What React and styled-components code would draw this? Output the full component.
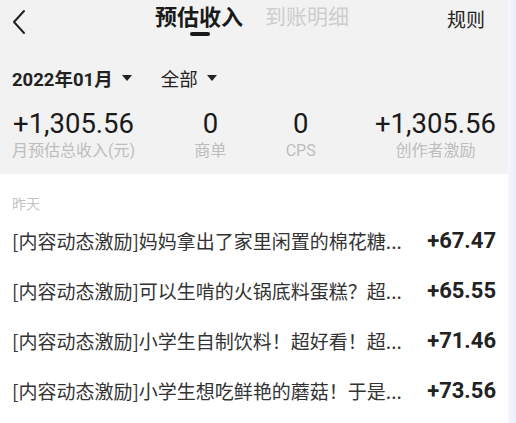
import React from "react";
import styled, { createGlobalStyle } from "styled-components";

const Global = createGlobalStyle`
  html, body { margin: 0; padding: 0; background: #ffffff; }
  body { font-family: Roboto, "Noto Sans CJK SC", sans-serif; }
  * { box-sizing: border-box; }
`;

const Page = styled.div`
  width: 516px;
  height: 423px;
  display: flex;
  overflow: hidden;
`;

const Main = styled.div`
  flex: 1;
  display: flex;
  flex-direction: column;
`;

const Strip = styled.div`
  width: 8px;
  background: linear-gradient(to right, #f4f6fb, #e9eef9);
`;

const Top = styled.div`
  background: #f2f2f2;
`;

const Header = styled.div`
  height: 60px;
  display: flex;
  align-items: flex-start;
`;

const Back = styled.div`
  width: 52px;
  padding: 9px 0 0 11px;
`;

const Tabs = styled.div`
  flex: 1;
  display: flex;
  gap: 22px;
  padding-left: 103px;
  padding-top: 0;
`;

const Tab = styled.div`
  position: relative;
  font-family: "Noto Sans CJK SC", sans-serif;
  font-size: ${(p) => (p.$active ? "22px" : "21px")};
  font-weight: ${(p) => (p.$active ? 700 : 400)};
  color: ${(p) => (p.$active ? "#1a1a1a" : "#cdcdcd")};
  line-height: 30px;
`;

const Indicator = styled.div`
  position: absolute;
  left: 35px;
  top: 32px;
  width: 20px;
  height: 4px;
  border-radius: 2px;
  background: #1a1a1a;
`;

const Rule = styled.div`
  font-family: "Noto Sans CJK SC", sans-serif;
  font-size: 19px;
  color: #222;
  padding: 6px 23px 0 0;
  line-height: 26px;
`;

const Filters = styled.div`
  display: flex;
  align-items: center;
  gap: 29px;
  padding: 5px 12px 0 12px;
  height: 31px;
`;

const Filter = styled.div`
  display: flex;
  align-items: center;
  gap: 9px;
  font-family: Roboto, "Noto Sans CJK SC", sans-serif;
  font-size: 18.5px;
  font-weight: ${(p) => (p.$bold ? 700 : 400)};
  color: #222;
`;

const Caret = styled.span`
  width: 0;
  height: 0;
  border-left: 5px solid transparent;
  border-right: 5px solid transparent;
  border-top: 6px solid #222;
`;

const Stats = styled.div`
  display: flex;
  justify-content: space-between;
  padding: 17px 12px 12px 12px;
`;

const Stat = styled.div`
  display: flex;
  flex-direction: column;
  align-items: center;
`;

const Value = styled.div`
  font-family: Roboto, sans-serif;
  font-size: 27.5px;
  color: #1a1a1a;
  line-height: 32px;
`;

const Label = styled.div`
  font-family: Roboto, "Noto Sans CJK SC", sans-serif;
  font-size: 16px;
  color: #bdbdbd;
  line-height: 22px;
`;

const List = styled.div`
  flex: 1;
  background: #ffffff;
  padding: 19px 12px 0 12px;
`;

const Day = styled.div`
  font-family: "Noto Sans CJK SC", sans-serif;
  font-size: 14px;
  color: #c4c4c4;
  line-height: 20px;
  margin-bottom: 2px;
`;

const Row = styled.div`
  display: flex;
  justify-content: space-between;
  align-items: center;
  height: 50px;
`;

const Title = styled.div`
  font-family: "Noto Sans CJK SC", sans-serif;
  font-size: 19px;
  color: #333;
  white-space: nowrap;
`;

const Amount = styled.div`
  font-family: Roboto, sans-serif;
  font-size: 22px;
  font-weight: 700;
  color: #222;
`;

const stats = [
  ["+1,305.56", "月预估总收入(元)"],
  ["0", "商单"],
  ["0", "CPS"],
  ["+1,305.56", "创作者激励"],
];

const rows = [
  ["[内容动态激励]妈妈拿出了家里闲置的棉花糖...", "+67.47"],
  ["[内容动态激励]可以生啃的火锅底料蛋糕？超...", "+65.55"],
  ["[内容动态激励]小学生自制饮料！超好看！超...", "+71.46"],
  ["[内容动态激励]小学生想吃鲜艳的蘑菇！于是...", "+73.56"],
];

export default function App() {
  return (
    <Page>
      <Global />
      <Main>
        <Top>
          <Header>
            <Back>
              <svg width="16" height="26" viewBox="0 0 16 26">
                <path d="M13 2 L3 13 L13 24" fill="none" stroke="#222" strokeWidth="2" strokeLinecap="round" strokeLinejoin="round" />
              </svg>
            </Back>
            <Tabs>
              <Tab $active>
                预估收入
                <Indicator />
              </Tab>
              <Tab>到账明细</Tab>
            </Tabs>
            <Rule>规则</Rule>
          </Header>
          <Filters>
            <Filter $bold>
              2022年01月 <Caret />
            </Filter>
            <Filter>
              全部 <Caret />
            </Filter>
          </Filters>
          <Stats>
            {stats.map(([v, l], i) => (
              <Stat key={i}>
                <Value>{v}</Value>
                <Label>{l}</Label>
              </Stat>
            ))}
          </Stats>
        </Top>
        <List>
          <Day>昨天</Day>
          {rows.map(([t, a], i) => (
            <Row key={i}>
              <Title>{t}</Title>
              <Amount>{a}</Amount>
            </Row>
          ))}
        </List>
      </Main>
      <Strip />
    </Page>
  );
}
